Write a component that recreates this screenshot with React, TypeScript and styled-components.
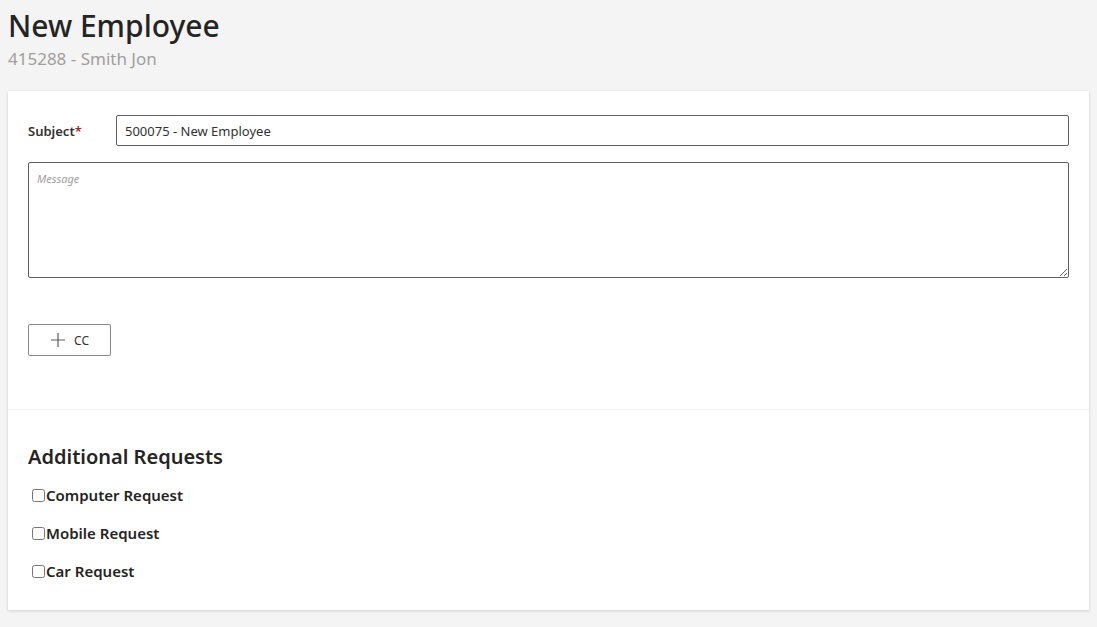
import React from "react";
import styled, { createGlobalStyle } from "styled-components";

const Global = createGlobalStyle`
  html, body { margin: 0; background: #f4f4f4; font-family: "Noto Sans", "Open Sans", sans-serif; color: #252423; }
`;
const Page = styled.div` padding: 6px 8px 10px 8px; `;
const Title = styled.h1` margin: 0; font-size: 30px; font-weight: 500; line-height: 40px; color: #252423; `;
const Sub = styled.div` font-size: 17px; color: #a19f9d; line-height: 26px; margin-bottom: 19px; `;
const Card = styled.div` background: #fff; box-shadow: 0 1px 3px rgba(0,0,0,0.15); `;
const Section = styled.div<{ $top?: boolean }>`
  padding: ${p => (p.$top ? "24px 20px 53px" : "33px 20px 29px")};
  ${p => (p.$top ? "border-bottom: 1px solid #f0f0f0;" : "")}
`;
const Row = styled.div` display: flex; align-items: center; margin-bottom: 16px; `;
const Label = styled.label` width: 88px; font-size: 13px; font-weight: 600; color: #323130; `;
const Star = styled.span` color: #a4262c; `;
const Input = styled.input`
  flex: 1; height: 31px; box-sizing: border-box; border: 1px solid #605e5c; border-radius: 2px;
  padding: 0 8px; font: 13px "Noto Sans", sans-serif; color: #323130;
`;
const Area = styled.textarea`
  display: block; width: 100%; height: 116px; box-sizing: border-box; border: 1px solid #605e5c; border-radius: 2px;
  padding: 8px; font: 11px "Noto Sans", sans-serif; resize: vertical;
  &::placeholder { color: #a19f9d; font-style: italic; }
`;
const CcButton = styled.button`
  margin-top: 46px; width: 83px; height: 32px; background: #fff; border: 1px solid #8a8886; border-radius: 2px;
  display: flex; align-items: center; justify-content: center; gap: 8px; font: 12px "Noto Sans", sans-serif; color: #323130;
`;
const H2 = styled.h2` margin: 0 0 14px; font-size: 20px; font-weight: 600; line-height: 28px; `;
const Check = styled.label`
  display: flex; align-items: center; gap: 1px; font-size: 15px; font-weight: 600; height: 20px; margin-bottom: 18px;
  &:last-child { margin-bottom: 0; }
  input { margin: 0 0 0 4px; width: 13px; height: 13px; }
`;

export default function App() {
  return (
    <>
      <Global />
      <Page>
        <Title>New Employee</Title>
        <Sub>415288 - Smith Jon</Sub>
        <Card>
          <Section $top>
            <Row>
              <Label>Subject<Star>*</Star></Label>
              <Input defaultValue="500075 - New Employee" />
            </Row>
            <Area placeholder="Message" />
            <CcButton>
              <svg width="16" height="16" viewBox="0 0 16 16"><path d="M8 1v14M1 8h14" stroke="#605e5c" strokeWidth="1.2" /></svg>
              CC
            </CcButton>
          </Section>
          <Section>
            <H2>Additional Requests</H2>
            {["Computer Request", "Mobile Request", "Car Request"].map(t => (
              <Check key={t}><input type="checkbox" />{t}</Check>
            ))}
          </Section>
        </Card>
      </Page>
    </>
  );
}
